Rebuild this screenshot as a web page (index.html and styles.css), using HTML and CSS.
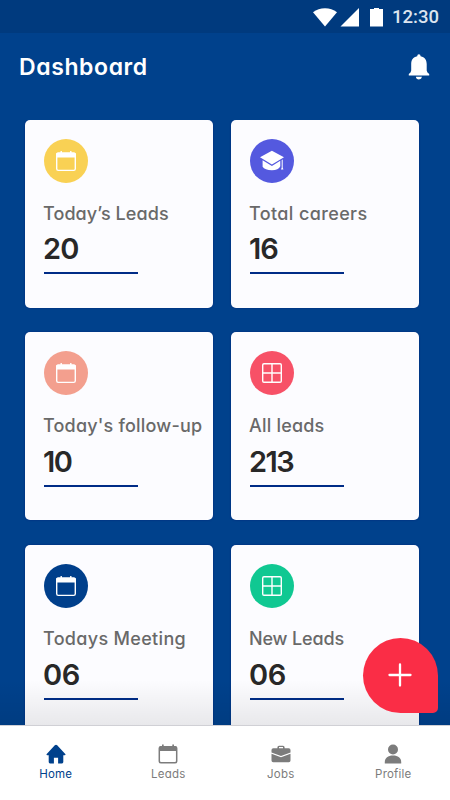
FILE: index.html
```html
<!DOCTYPE html>
<html lang="en">
<head>
    <title>Dashboard</title>
    <meta charset="utf-8">
    <meta name="viewport" content="width=device-width, initial-scale=1">
    <link rel="stylesheet" href="styles.css">
</head>
<body>
    <svg class="symbols">
        <symbol id="calendar" viewBox="0 0 22 22">
            <rect x="1.7" y="3.2" width="18.6" height="17.2" rx="1.6" fill="none" stroke="currentColor" stroke-width="1.4"/>
            <path d="M1 7.500V4.200Q1 2.500 2.800 2.500H19.200Q21 2.500 21 4.200V7.500ZM5.500 1H6.900V3H5.500ZM15.100 1H16.500V3H15.100Z" fill="currentColor"/>
        </symbol>
        <symbol id="grid" viewBox="0 0 22 22">
            <path d="M3 1.700H19Q20.300 1.700 20.300 3V19Q20.300 20.300 19 20.300H3Q1.700 20.300 1.700 19V3Q1.700 1.700 3 1.700ZM11 1.700V20.300M1.700 11H20.300" fill="none" stroke="currentColor" stroke-width="1.4"/>
        </symbol>
        <symbol id="careers" viewBox="0 0 24 22">
            <path d="M11.900.8 24 7.200 11.900 14.600-.1 7.200ZM2.600 10.200 11.900 15.900 20.300 10.700V16.300Q18.500 20.200 11.900 20.200 4.800 20.200 2.600 16.800ZM21.700 10 22.700 9.400V17.500L23.400 19.500H21L21.700 17.500Z" fill="currentColor"/>
        </symbol>
    </svg>

    <div class="status-bar">
        <svg class="wifi" width="24" height="19" viewBox="0 0 24 19"><path d="M0 4.300Q5.200.2 12 .2T24 4.300L12 18.500Z" fill="#fff"/></svg>
        <svg class="signal" width="19" height="19" viewBox="0 0 19 19"><path d="M19 0V18.500H.5Z" fill="#fff"/></svg>
        <svg class="battery" width="13" height="19" viewBox="0 0 13 19"><path d="M4 0H9V1H13V18.500H0V1H4Z" fill="#fff"/></svg>
        <span class="time">12:30</span>
    </div>

    <div class="header">
        <h1>Dashboard</h1>
        <svg class="bell" width="22" height="26" viewBox="0 0 22 26"><path d="M9.200 2.200Q9.200.3 10.900.3T12.600 2.200C16.800 3 18.700 6.200 18.700 10V16.500Q19 18.500 21.200 20V21.400H.8V20Q3 18.500 3.200 16.500V10C3.200 6.200 5 3 9.200 2.200ZM7.900 22.800H14Q13.600 25.400 10.900 25.400T7.900 22.800Z" fill="#fff"/></svg>
    </div>

    <div class="cards">
        <div class="card">
            <div class="circle yellow"><svg><use href="#calendar"/></svg></div>
            <div class="label today-leads">Today’s Leads</div>
            <div class="count">20</div>
        </div>
        <div class="card">
            <div class="circle purple"><svg class="cap"><use href="#careers"/></svg></div>
            <div class="label total-careers">Total careers</div>
            <div class="count">16</div>
        </div>
        <div class="card second">
            <div class="circle peach"><svg><use href="#calendar"/></svg></div>
            <div class="label follow-up">Today's follow-up</div>
            <div class="count narrow">10</div>
        </div>
        <div class="card second">
            <div class="circle red"><svg><use href="#grid"/></svg></div>
            <div class="label all-leads">All leads</div>
            <div class="count narrow">213</div>
        </div>
        <div class="card third">
            <div class="circle blue"><svg><use href="#calendar"/></svg></div>
            <div class="label meeting">Todays Meeting</div>
            <div class="count wide">06</div>
        </div>
        <div class="card third">
            <div class="circle green"><svg><use href="#grid"/></svg></div>
            <div class="label new-leads">New Leads</div>
            <div class="count wide">06</div>
        </div>
    </div>

    <div class="fade"></div>
    <button class="add" aria-label="Add">
        <svg width="24" height="24" viewBox="0 0 24 24"><path d="M12 1.500V22.500M1.500 12H22.500" stroke="#fff" stroke-width="2.300" stroke-linecap="round"/></svg>
    </button>

    <div class="nav">
        <a class="active">
            <svg width="20" height="20" viewBox="0 0 20 20"><path d="M.5 10.200 8.800 1.200Q10 .1 11.200 1.200L19.500 10.200Q19.800 11.300 18.500 11.300H17.300V18Q17.300 19.400 16 19.400H12.100V13.800H7.900V19.400H4Q2.700 19.400 2.700 18V11.300H1.500Q.2 11.300.5 10.200Z" fill="currentColor"/></svg>
            <span>Home</span>
        </a>
        <a>
            <svg width="20" height="20" viewBox="0 0 20 20"><path d="M1 7V4Q1 2 3 2H17Q19 2 19 4V7ZM4 .4H5.700V3H4ZM14.300.4H16V3H14.300Z" fill="currentColor"/><rect x="1.300" y="2.700" width="17.400" height="16.100" rx="1.800" fill="none" stroke="currentColor" stroke-width="1.500"/></svg>
            <span>Leads</span>
        </a>
        <a>
            <svg width="20" height="20" viewBox="0 0 20 20"><path d="M.5 8.500V6Q.5 4.200 2.300 4.200H6.400V3.300Q6.400 1.700 8 1.700H12Q13.600 1.700 13.600 3.300V4.200H17.700Q19.500 4.200 19.500 6V8.500L10 12ZM8 4.200H12V3.100H8ZM.5 9.800 10 13.300 19.500 9.800V16.500Q19.500 18.200 17.800 18.200H2.200Q.5 18.200.5 16.500Z" fill="currentColor" fill-rule="evenodd"/></svg>
            <span>Jobs</span>
        </a>
        <a>
            <svg width="20" height="20" viewBox="0 0 20 20"><circle cx="10" cy="5.500" r="5" fill="currentColor"/><path d="M1.800 19.400V18.200C1.800 14 5 11.600 10 11.600S18.200 14 18.200 18.200V19.400Z" fill="currentColor"/></svg>
            <span>Profile</span>
        </a>
    </div>
</body>
</html>
```

FILE: styles.css
```css
* {
    box-sizing: border-box;
}
body {
    margin: 0;
    height: 800px;
    overflow: hidden;
    display: flex;
    flex-direction: column;
    position: relative;
    background: #00418c;
    font-family: Inter, "Liberation Sans", sans-serif;
    font-feature-settings: "cv11";
}
svg {
    display: block;
    flex: none;
}
.symbols {
    position: absolute;
    width: 0;
    height: 0;
}
.status-bar {
    flex: none;
    height: 33px;
    display: flex;
    align-items: center;
    justify-content: flex-end;
    padding: 1px 11px 0 0;
    background: #003a7e;
}
.signal {
    margin-left: 3px;
}
.battery {
    margin-left: 11px;
}
.time {
    width: 47px;
    margin-left: 9px;
    font: 500 18.5px/35px Roboto, sans-serif;
    color: #dce5ef;
}
.header {
    flex: none;
    height: 87px;
    display: flex;
    justify-content: space-between;
    padding: 21px 20px 0 19px;
}
h1 {
    margin: 0;
    font-size: 23px;
    line-height: 27px;
    font-weight: 600;
    letter-spacing: 0.6px;
    color: #fff;
}
.cards {
    flex: none;
    height: 605px;
    overflow: hidden;
    display: grid;
    grid-template-columns: 188px 188px;
    grid-auto-rows: 187.5px;
    gap: 24.9px 18px;
    padding-left: 25px;
}
.card {
    padding: 19px 0 0 19px;
    border-radius: 5px;
    background: #fcfcff;
    box-shadow: 0 0 1px 1px #00308080;
}
.circle {
    width: 44px;
    height: 44px;
    border-radius: 50%;
    display: flex;
    align-items: center;
    justify-content: center;
    color: #fff;
}
.circle svg {
    width: 22px;
    height: 22px;
}
.circle .cap {
    width: 24px;
}
.yellow { background: #f9d154; }
.purple { background: #5459df; }
.peach { background: #f39f8e; }
.red { background: #f75167; }
.blue { background: #003f8b; }
.green { background: #10c892; }
.label {
    margin: 19px 0 0 -1px;
    font-size: 18px;
    line-height: 24px;
    font-weight: 550;
    color: #696969;
    white-space: nowrap;
}
.today-leads { letter-spacing: 0.08px; }
.total-careers { letter-spacing: 0.38px; }
.follow-up { letter-spacing: 0.2px; }
.all-leads { letter-spacing: 0.2px; }
.meeting { letter-spacing: 0.32px; }
.new-leads { letter-spacing: -0.15px; }
.count {
    width: 94px;
    height: 49px;
    margin-top: -1px;
    border-bottom: 2px solid #002c87;
    font-size: 29px;
    line-height: 48px;
    font-weight: 600;
    letter-spacing: -0.9px;
    text-indent: -1px;
    color: #282828;
}
.narrow {
    letter-spacing: -1.5px;
}
.wide {
    letter-spacing: -0.3px;
}
.second .count,
.third .count {
    height: 50px;
    line-height: 50px;
}
.fade {
    position: absolute;
    left: 0;
    right: 0;
    top: 680px;
    height: 45px;
    background: linear-gradient(#0000, #00000014);
}
.add {
    position: absolute;
    left: 363px;
    top: 638px;
    width: 75px;
    height: 75px;
    padding: 0 1px 1px 0;
    border: 0;
    border-radius: 50% 50% 5px 50%;
    display: flex;
    align-items: center;
    justify-content: center;
    background: #fa2d46;
}
.nav {
    flex: none;
    height: 75px;
    display: grid;
    grid-template-columns: repeat(4, 112.5px);
    border-top: 1px solid #d0d0d5;
    background: #fff;
}
.nav a {
    display: flex;
    flex-direction: column;
    align-items: center;
    padding: 18px 1px 0 0;
    color: #7c7c7c;
}
.nav span {
    margin-top: 1px;
    font-size: 11.5px;
    line-height: 18px;
    letter-spacing: 0.2px;
}
.nav .active {
    color: #00418c;
}
```
